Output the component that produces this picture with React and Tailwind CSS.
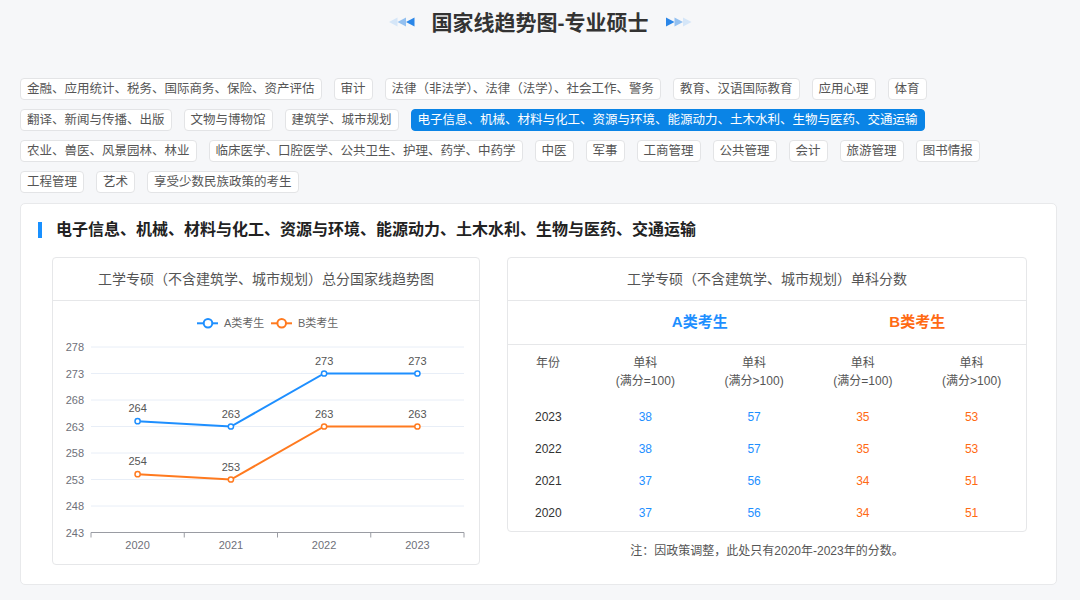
import React from 'react';

const TAG_ROWS = [
  ['金融、应用统计、税务、国际商务、保险、资产评估', '审计', '法律（非法学）、法律（法学）、社会工作、警务', '教育、汉语国际教育', '应用心理', '体育'],
  ['翻译、新闻与传播、出版', '文物与博物馆', '建筑学、城市规划', '电子信息、机械、材料与化工、资源与环境、能源动力、土木水利、生物与医药、交通运输'],
  ['农业、兽医、风景园林、林业', '临床医学、口腔医学、公共卫生、护理、药学、中药学', '中医', '军事', '工商管理', '公共管理', '会计', '旅游管理', '图书情报'],
  ['工程管理', '艺术', '享受少数民族政策的考生'],
];

const ACTIVE = '电子信息、机械、材料与化工、资源与环境、能源动力、土木水利、生物与医药、交通运输';

const YEARS = ['2020', '2021', '2022', '2023'];
const A_TOTAL = [264, 263, 273, 273];
const B_TOTAL = [254, 253, 263, 263];

const TABLE = [
  { year: '2023', a1: 38, a2: 57, b1: 35, b2: 53 },
  { year: '2022', a1: 38, a2: 57, b1: 35, b2: 53 },
  { year: '2021', a1: 37, a2: 56, b1: 34, b2: 51 },
  { year: '2020', a1: 37, a2: 56, b1: 34, b2: 51 },
];

const BLUE = '#1e8fff';
const ORANGE = '#ff7a1f';

function Arrows({ dir }) {
  const colors = dir === 'left' ? ['#d5e6f8', '#93c0f0', '#2a86e8'] : ['#2a86e8', '#93c0f0', '#d5e6f8'];
  return (
    <svg width="26" height="10" viewBox="0 0 26 10">
      {[0, 8.5, 17].map((x, i) => (
        <polygon
          key={i}
          points={dir === 'left' ? `${x + 8.5},0.5 ${x},5 ${x + 8.5},9.5` : `${x},0.5 ${x + 8.5},5 ${x},9.5`}
          fill={colors[i]}
        />
      ))}
    </svg>
  );
}

function Chart() {
  const yOf = (v) => 231.5 - (v - 243) * 5.3;
  const xs = [84.6, 177.9, 271.1, 364.4];
  const ticks = [278, 273, 268, 263, 258, 253, 248];
  const line = (arr) => arr.map((v, i) => `${xs[i]},${yOf(v)}`).join(' ');

  return (
    <svg width="426" height="263" viewBox="0 0 426 263" className="block">
      {/* legend */}
      <line x1="144" y1="22.3" x2="165" y2="22.3" stroke={BLUE} strokeWidth="2" />
      <circle cx="155" cy="22.3" r="4.3" fill="#fff" stroke={BLUE} strokeWidth="2" />
      <text x="171" y="26" fontSize="11" fill="#666">A类考生</text>
      <line x1="218" y1="22.3" x2="239" y2="22.3" stroke={ORANGE} strokeWidth="2" />
      <circle cx="228.7" cy="22.3" r="4.3" fill="#fff" stroke={ORANGE} strokeWidth="2" />
      <text x="245" y="26" fontSize="11" fill="#666">B类考生</text>

      {ticks.map((t) => (
        <line key={t} x1="38" x2="411" y1={yOf(t)} y2={yOf(t)} stroke="#e8eef7" strokeWidth="1" />
      ))}
      {[...ticks, 243].map((t) => (
        <text key={t} x="31" y={yOf(t) + 4} fontSize="11" fill="#6e7079" textAnchor="end">{t}</text>
      ))}

      <line x1="38" x2="411" y1={yOf(243)} y2={yOf(243)} stroke="#9a9ca3" strokeWidth="1" />
      {[38, 131.25, 224.5, 317.75, 411].map((x) => (
        <line key={x} x1={x} x2={x} y1={yOf(243)} y2={yOf(243) + 5} stroke="#9a9ca3" strokeWidth="1" />
      ))}
      {YEARS.map((y, i) => (
        <text key={y} x={xs[i]} y="248" fontSize="11" fill="#6e7079" textAnchor="middle">{y}</text>
      ))}

      <polyline points={line(A_TOTAL)} fill="none" stroke={BLUE} strokeWidth="2" />
      <polyline points={line(B_TOTAL)} fill="none" stroke={ORANGE} strokeWidth="2" />
      {A_TOTAL.map((v, i) => (
        <g key={`a${i}`}>
          <circle cx={xs[i]} cy={yOf(v)} r="2.6" fill="#fff" stroke={BLUE} strokeWidth="1.5" />
          <text x={xs[i]} y={yOf(v) - 9} fontSize="11" fill="#555" textAnchor="middle">{v}</text>
        </g>
      ))}
      {B_TOTAL.map((v, i) => (
        <g key={`b${i}`}>
          <circle cx={xs[i]} cy={yOf(v)} r="2.6" fill="#fff" stroke={ORANGE} strokeWidth="1.5" />
          <text x={xs[i]} y={yOf(v) - 9} fontSize="11" fill="#555" textAnchor="middle">{v}</text>
        </g>
      ))}
    </svg>
  );
}

export default function App() {
  return (
    <div className="h-[600px] w-[1080px] overflow-hidden bg-[#f6f7f9] font-['Liberation_Sans','Noto_Sans_CJK_SC',sans-serif] text-[#333]">
      {/* Title */}
      <div className="flex h-[44px] items-center justify-center gap-[17px]">
        <Arrows dir="left" />
        <h1 className="text-[21px] font-bold leading-none text-[#333]">国家线趋势图-专业硕士</h1>
        <Arrows dir="right" />
      </div>

      {/* Tags */}
      <div className="mt-[34px] flex flex-col gap-[9px] px-[20px]">
        {TAG_ROWS.map((row, ri) => (
          <div key={ri} className="flex gap-[12px]">
            {row.map((tag) => (
              <span
                key={tag}
                className={
                  tag === ACTIVE
                    ? 'h-[22px] whitespace-nowrap rounded-[4px] border border-[#0a84e6] bg-[#0a84e6] px-[6px] text-[12.5px] leading-[20px] text-white'
                    : 'h-[22px] whitespace-nowrap rounded-[4px] border border-[#e3e4e6] bg-white px-[6px] text-[12.5px] leading-[20px] text-[#555]'
                }
              >
                {tag}
              </span>
            ))}
          </div>
        ))}
      </div>

      {/* Main card */}
      <div className="ml-[20px] mt-[10px] w-[1037px] rounded-[5px] border border-[#e8e9eb] bg-white pb-[19px] pl-[31px] pt-[16px]">
        <div className="-ml-[14px] flex h-[20px] items-center">
          <div className="h-[16px] w-[4px] bg-[#1890ff]" />
          <h2 className="ml-[14px] text-[16px] font-bold leading-none text-[#222]">{ACTIVE}</h2>
        </div>

        <div className="mt-[17px] flex gap-[27px]">
          {/* Left: trend chart */}
          <div className="w-[428px] rounded-[4px] border border-[#e6e7e9]">
            <div className="flex h-[43px] items-center justify-center border-b border-[#e6e7e9] text-[14px] text-[#555]">
              工学专硕（不含建筑学、城市规划）总分国家线趋势图
            </div>
            <Chart />
          </div>

          {/* Right: single-subject table */}
          <div className="w-[520px]">
            <div className="rounded-[4px] border border-[#e6e7e9] pb-[2px]">
              <div className="flex h-[43px] items-center justify-center border-b border-[#e6e7e9] text-[14px] text-[#555]">
                工学专硕（不含建筑学、城市规划）单科分数
              </div>
              <div className="grid h-[44px] grid-cols-[83px_1fr_1fr_1fr_1fr] items-center border-b border-[#e6e7e9] text-[15px] font-bold">
                <div />
                <div className="col-span-2 text-center text-[#1e8fff]">A类考生</div>
                <div className="col-span-2 text-center text-[#ff6a13]">B类考生</div>
              </div>
              <div className="grid grid-cols-[83px_1fr_1fr_1fr_1fr] pb-[11px] pt-[9px] text-[12px] leading-[18px] text-[#555]">
                <div className="pl-[28px]">年份</div>
                <div className="text-center">单科<br />(满分=100)</div>
                <div className="text-center">单科<br />(满分&gt;100)</div>
                <div className="text-center">单科<br />(满分=100)</div>
                <div className="text-center">单科<br />(满分&gt;100)</div>
              </div>
              {TABLE.map((r) => (
                <div key={r.year} className="grid h-[32px] grid-cols-[83px_1fr_1fr_1fr_1fr] items-center text-[12px]">
                  <div className="pl-[27px] text-[#333]">{r.year}</div>
                  <div className="text-center text-[#1e8fff]">{r.a1}</div>
                  <div className="text-center text-[#1e8fff]">{r.a2}</div>
                  <div className="text-center text-[#ff6a13]">{r.b1}</div>
                  <div className="text-center text-[#ff6a13]">{r.b2}</div>
                </div>
              ))}
            </div>
            <p className="mt-[10px] text-center text-[12px] leading-[18px] text-[#555]">
              注：因政策调整，此处只有2020年-2023年的分数。
            </p>
          </div>
        </div>
      </div>
    </div>
  );
}
